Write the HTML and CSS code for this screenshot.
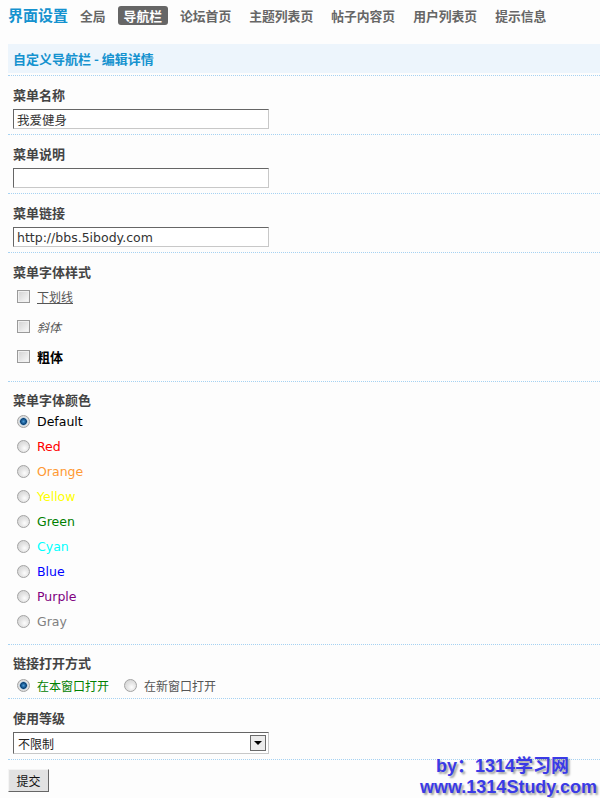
FILE: index.html
```html
<!DOCTYPE html>
<html lang="zh-CN">
<head>
<meta charset="utf-8">
<title>界面设置 - 导航栏</title>
<link rel="stylesheet" href="styles.css">
</head>
<body>
<div class="page">
  <nav class="topnav">
    <span class="title">界面设置</span>
    <a class="item">全局</a>
    <a class="item active">导航栏</a>
    <a class="item">论坛首页</a>
    <a class="item">主题列表页</a>
    <a class="item">帖子内容页</a>
    <a class="item">用户列表页</a>
    <a class="item">提示信息</a>
  </nav>

  <div class="head">自定义导航栏 - 编辑详情</div>

  <form class="form">
    <div class="sec">
      <div class="lbl">菜单名称</div>
      <input class="txt" type="text" value="我爱健身">
    </div>
    <div class="sec">
      <div class="lbl">菜单说明</div>
      <input class="txt" type="text" value="">
    </div>
    <div class="sec">
      <div class="lbl">菜单链接</div>
      <input class="txt" type="text" value="http://bbs.5ibody.com">
    </div>
    <div class="sec sec-checks">
      <div class="lbl">菜单字体样式</div>
      <label class="row row-30"><input class="cb" type="checkbox"><span class="u">下划线</span></label>
      <label class="row row-30"><input class="cb" type="checkbox"><span class="i">斜体</span></label>
      <label class="row row-30"><input class="cb" type="checkbox"><span class="b">粗体</span></label>
    </div>
    <div class="sec sec-colors">
      <div class="lbl">菜单字体颜色</div>
      <label class="row row-25"><input class="rd" type="radio" name="c" checked><span class="en c-default">Default</span></label>
      <label class="row row-25"><input class="rd" type="radio" name="c"><span class="en c-red">Red</span></label>
      <label class="row row-25"><input class="rd" type="radio" name="c"><span class="en c-orange">Orange</span></label>
      <label class="row row-25"><input class="rd" type="radio" name="c"><span class="en c-yellow">Yellow</span></label>
      <label class="row row-25"><input class="rd" type="radio" name="c"><span class="en c-green">Green</span></label>
      <label class="row row-25"><input class="rd" type="radio" name="c"><span class="en c-cyan">Cyan</span></label>
      <label class="row row-25"><input class="rd" type="radio" name="c"><span class="en c-blue">Blue</span></label>
      <label class="row row-25"><input class="rd" type="radio" name="c"><span class="en c-purple">Purple</span></label>
      <label class="row row-25"><input class="rd" type="radio" name="c"><span class="en c-gray">Gray</span></label>
    </div>
    <div class="sec sec-open">
      <div class="lbl">链接打开方式</div>
      <div class="row row-26">
        <label class="opt"><input class="rd" type="radio" name="o" checked><span class="c-green">在本窗口打开</span></label>
        <label class="opt opt2"><input class="rd" type="radio" name="o"><span>在新窗口打开</span></label>
      </div>
    </div>
    <div class="sec sec-last">
      <div class="lbl">使用等级</div>
      <div class="select">
        <span class="sel-text">不限制</span>
        <span class="sel-btn">
          <svg width="14" height="14" viewBox="0 0 14 14"><polygon points="3,5 11,5 7,9" fill="#000"/></svg>
        </span>
      </div>
    </div>
    <div class="submit-row"><button type="button" class="btn">提交</button></div>
  </form>

  <div class="watermark">
    <div class="wm1">by：1314学习网</div>
    <div class="wm2">www.1314Study.com</div>
  </div>
</div>
</body>
</html>
```
FILE: styles.css
```css
html, body {
  margin: 0;
  padding: 0;
  background: #fdfdfd;
}
body {
  font-family: "DejaVu Sans", "Noto Sans CJK SC", sans-serif;
  font-size: 12px;
  color: #444;
}
.page {
  position: relative;
  padding-left: 8px;
  height: 798px;
  overflow: hidden;
}

/* top navigation */
.topnav {
  display: flex;
  align-items: center;
  gap: 6px;
  height: 20px;
  padding-top: 5px;
  font-family: "Noto Sans CJK SC", sans-serif;
}
.title {
  font-size: 15px;
  font-weight: bold;
  color: #1592cf;
  line-height: 20px;
}
.item {
  font-size: 12.8px;
  font-weight: bold;
  color: #666;
  line-height: 19px;
  padding: 0 6px;
  border-radius: 3px;
}
.item.active {
  background: #666;
  color: #fff;
}

/* header bar */
.head {
  margin-top: 19px;
  height: 29px;
  line-height: 29px;
  padding-left: 5px;
  background: #edf5fc;
  font-family: "Noto Sans CJK SC", sans-serif;
  font-size: 13px;
  font-weight: bold;
  color: #1592cf;
  margin-bottom: 2px;
}

/* sections */
.sec {
  border-top: 1px dotted #a6d2f2;
  padding: 10px 5px 5px;
}
.sec-last {
  border-bottom: 1px dotted #a6d2f2;
}
.lbl {
  font-family: "Noto Sans CJK SC", sans-serif;
  font-size: 13px;
  font-weight: bold;
  color: #444;
  line-height: 18px;
  margin-bottom: 5px;
}
.sec-checks .lbl,
.sec-colors .lbl,
.sec-open .lbl {
  margin-bottom: 0;
}
.sec-checks {
  padding-bottom: 10px;
}
.sec-colors {
  padding-top: 9px;
  padding-bottom: 10px;
}
.sec-open {
  padding-top: 9px;
  padding-bottom: 0;
}

.txt {
  display: block;
  box-sizing: border-box;
  width: 256px;
  height: 20px;
  margin: 0;
  padding: 0 3px;
  border: 1px solid;
  border-color: #666 #c8c8c8 #c8c8c8 #666;
  background: #fff;
  font-family: "DejaVu Sans", "Noto Sans CJK SC", sans-serif;
  font-size: 12.5px;
  color: #333;
  outline: none;
}

/* rows with controls */
.row {
  display: flex;
  align-items: center;
}
.row-30 { height: 30px; }
.row-25 { height: 25px; }
.row-26 { height: 26px; }
.opt {
  display: flex;
  align-items: center;
}
.opt2 {
  margin-left: 15px;
}

.cb, .rd {
  -webkit-appearance: none;
  appearance: none;
  box-sizing: border-box;
  width: 13px;
  height: 13px;
  margin: 0 7px 0 4px;
  flex: none;
}
.opt2 .rd {
  margin-left: 0;
}
.cb {
  border: 1px solid #9a9a9a;
  background: linear-gradient(135deg, #d2d2d2 0%, #e6e6e6 50%, #fbfbfb 100%);
  box-shadow: inset 0 0 0 1px #f0f0f0;
}
.rd {
  border: 1px solid #a3a3a3;
  border-radius: 50%;
  background: radial-gradient(circle at 60% 65%, #fdfdfd 0, #e4e4e4 45%, #cfcfcf 100%);
}
.rd:checked {
  background: radial-gradient(circle at 50% 50%, #4d9bd6 0, #1a5e98 2px, #0c3f70 3px, #7aa8cc 3.6px, #e3e3e3 4.3px, #cdcdcd 100%);
}

.sec-checks span,
.sec-open span {
  font-family: "Noto Sans CJK SC", sans-serif;
  font-size: 12px;
  color: #555;
}
.u { text-decoration: underline; }
.i { font-style: italic; }
.sec-checks .b {
  font-weight: bold;
  font-size: 13px;
  color: #000;
}

.en {
  font-family: "DejaVu Sans", sans-serif;
  font-size: 12.5px;
}
.c-default { color: #000; }
.c-red { color: #ff0000; }
.c-orange { color: #ff9933; }
.c-yellow { color: #ffff00; }
.sec-open .c-green,
.c-green { color: #008000; }
.c-cyan { color: #00ffff; }
.c-blue { color: #0000ff; }
.c-purple { color: #800080; }
.c-gray { color: #808080; }

/* select */
.select {
  box-sizing: border-box;
  width: 256px;
  height: 22px;
  display: flex;
  align-items: center;
  border: 1px solid;
  border-color: #666 #c8c8c8 #c8c8c8 #666;
  background: #fff;
}
.sel-text {
  padding-left: 4px;
  font-family: "Noto Sans CJK SC", sans-serif;
  font-size: 12px;
  color: #222;
}
.sel-btn {
  margin-left: auto;
  margin-right: 2px;
  box-sizing: border-box;
  width: 16px;
  height: 16px;
  border: 1px solid #6a6a6a;
  background: #ececec;
  display: flex;
  align-items: center;
  justify-content: center;
}
.sel-btn svg {
  display: block;
}

/* submit */
.submit-row {
  padding-top: 9px;
}
.btn {
  box-sizing: border-box;
  width: 41px;
  height: 23px;
  margin: 0;
  padding: 0;
  border: 1px solid;
  border-color: #f4f4f4 #666 #666 #f4f4f4;
  background: #e2e2e2;
  font-family: "Noto Sans CJK SC", sans-serif;
  font-size: 12px;
  color: #111;
}

/* watermark overlay */
.watermark {
  position: absolute;
  left: 420px;
  top: 756px;
  font-family: "Liberation Sans", "Noto Sans CJK SC", sans-serif;
  font-size: 18px;
  font-weight: bold;
  line-height: 21px;
  color: #3a3ae6;
  text-shadow: 2px 2px 2px rgba(0, 0, 0, 0.35);
  white-space: nowrap;
}
.wm1 {
  padding-left: 16px;
}
```
